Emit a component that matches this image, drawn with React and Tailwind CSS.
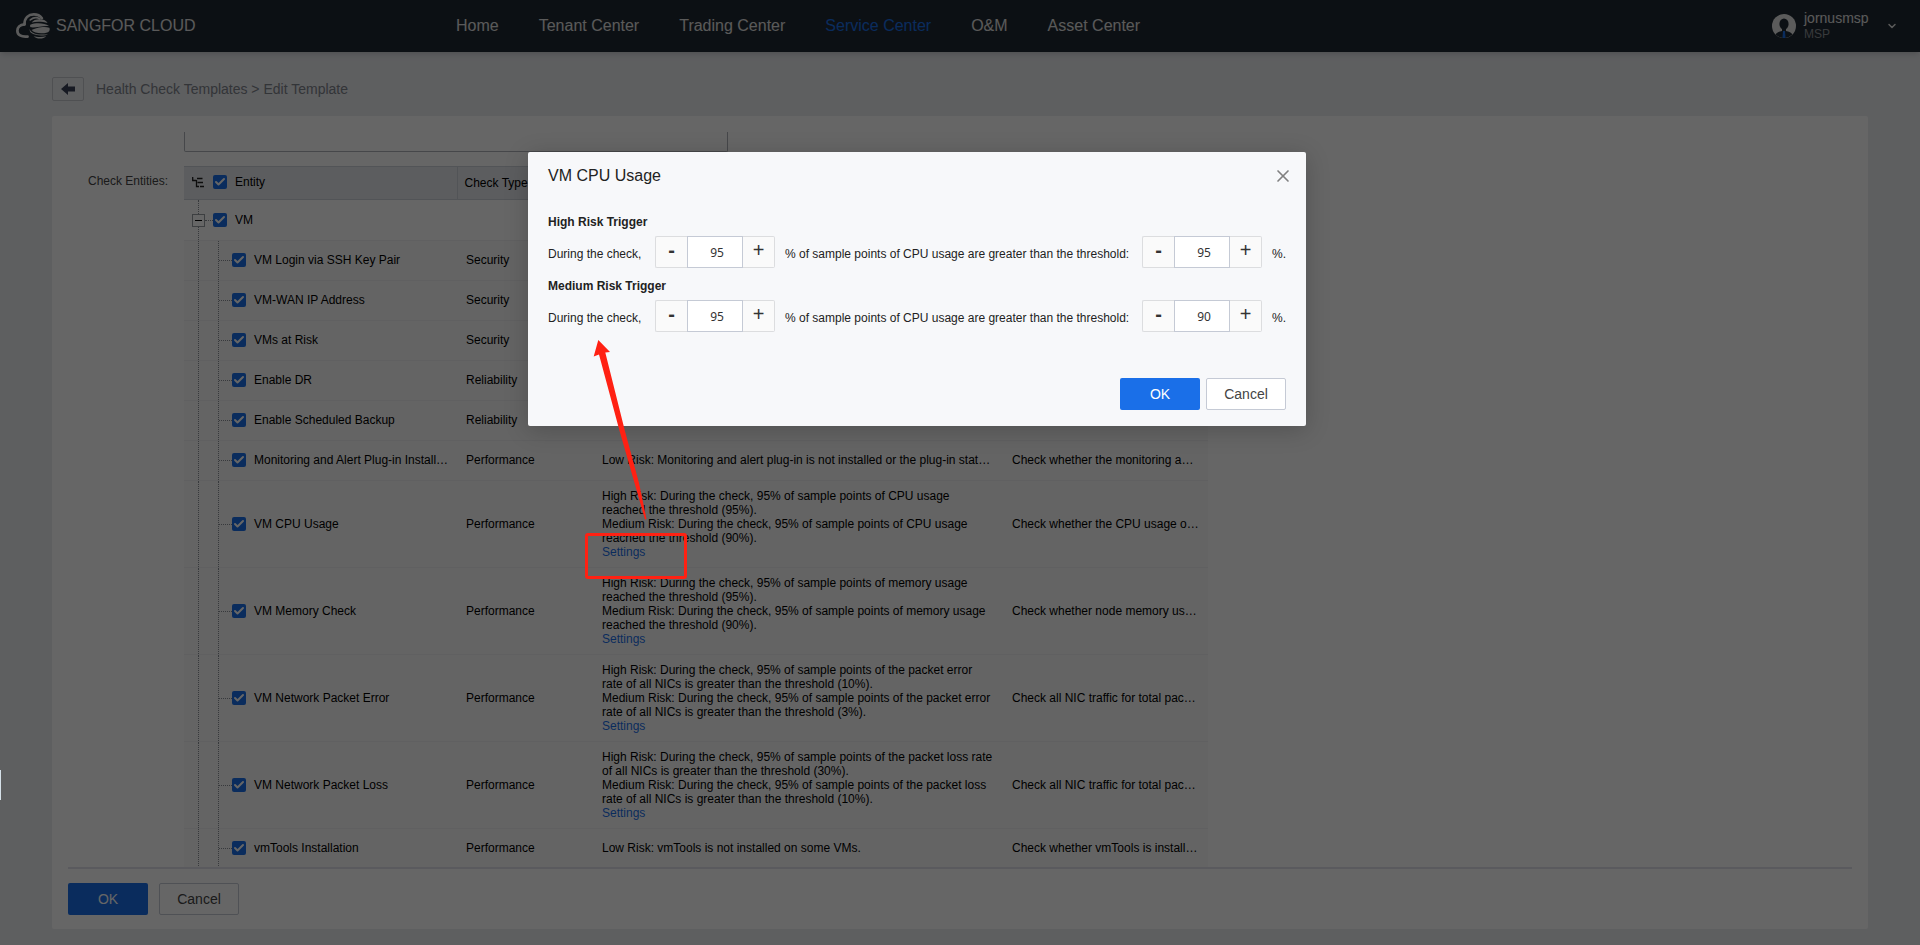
import { useState } from 'react';
import { Check, ChevronDown, X } from 'lucide-react';

const navItems = ['Home', 'Tenant Center', 'Trading Center', 'Service Center', 'O&M', 'Asset Center'];

const entities = [
  { name: 'VM Login via SSH Key Pair', type: 'Security' },
  { name: 'VM-WAN IP Address', type: 'Security' },
  { name: 'VMs at Risk', type: 'Security' },
  { name: 'Enable DR', type: 'Reliability' },
  { name: 'Enable Scheduled Backup', type: 'Reliability' },
  {
    name: 'Monitoring and Alert Plug-in Install…',
    type: 'Performance',
    rules: ['Low Risk: Monitoring and alert plug-in is not installed or the plug-in stat…'],
    desc: 'Check whether the monitoring a…',
  },
  {
    name: 'VM CPU Usage',
    type: 'Performance',
    rules: [
      'High Risk: During the check, 95% of sample points of CPU usage reached the threshold (95%).',
      'Medium Risk: During the check, 95% of sample points of CPU usage reached the threshold (90%).',
    ],
    desc: 'Check whether the CPU usage o…',
    settings: true,
  },
  {
    name: 'VM Memory Check',
    type: 'Performance',
    rules: [
      'High Risk: During the check, 95% of sample points of memory usage reached the threshold (95%).',
      'Medium Risk: During the check, 95% of sample points of memory usage reached the threshold (90%).',
    ],
    desc: 'Check whether node memory us…',
    settings: true,
  },
  {
    name: 'VM Network Packet Error',
    type: 'Performance',
    rules: [
      'High Risk: During the check, 95% of sample points of the packet error rate of all NICs is greater than the threshold (10%).',
      'Medium Risk: During the check, 95% of sample points of the packet error rate of all NICs is greater than the threshold (3%).',
    ],
    desc: 'Check all NIC traffic for total pac…',
    settings: true,
  },
  {
    name: 'VM Network Packet Loss',
    type: 'Performance',
    rules: [
      'High Risk: During the check, 95% of sample points of the packet loss rate of all NICs is greater than the threshold (30%).',
      'Medium Risk: During the check, 95% of sample points of the packet loss rate of all NICs is greater than the threshold (10%).',
    ],
    desc: 'Check all NIC traffic for total pac…',
    settings: true,
  },
  {
    name: 'vmTools Installation',
    type: 'Performance',
    rules: ['Low Risk: vmTools is not installed on some VMs.'],
    desc: 'Check whether vmTools is install…',
  },
];

function Logo() {
  return (
    <svg viewBox="0 0 100 76" className="h-[26px] w-[34px]" fill="none" stroke="#e4e4e4" strokeLinecap="round">
      <path d="M25 33C25 14 37 4 52 4C63 4 71 8 76 15" strokeWidth="8" />
      <path d="M42 20C51 13 62 12 70 17" strokeWidth="5" />
      <path d="M25 33C11 34 4 43 4 52C4 64 15 71 34 69" strokeWidth="8" />
      <g fill="#e4e4e4" stroke="none">
        <path d="M46 28C53 16 84 14 93 29C78 25 60 24 46 28Z" />
        <path d="M42 34C60 27 84 29 97 38C80 36 58 44 44 42C41 40 41 37 42 34Z" />
        <path d="M46 50C56 44 82 38 98 43C101 49 98 55 92 57C76 62 54 60 46 50Z" />
        <path d="M40 47C44 60 62 66 94 62C88 67 58 69 44 58C41 55 40 51 40 47Z" />
        <path d="M52 68C62 71 78 71 89 68C80 77 61 77 52 68Z" />
      </g>
    </svg>
  );
}

function Avatar() {
  return (
    <svg viewBox="0 0 24 24" className="size-6">
      <circle cx="12" cy="12" r="12" fill="#e4e4e4" />
      <ellipse cx="12" cy="10" rx="4.6" ry="5.6" fill="#202a33" />
      <path d="M10 14h4v3c3 .6 5.500 1.600 6.400 3.600A12 12 0 0 1 3.600 20.600C4.500 18.600 7 17.600 10 17Z" fill="#202a33" />
      <path d="M11 17h2l.5 7h-3Z" fill="#1a6fe8" />
    </svg>
  );
}

function CheckBox({ label }) {
  return (
    <label className="flex items-center gap-2">
      <span className="grid size-[14px] place-items-center">
        <input
          type="checkbox"
          defaultChecked
          className="col-start-1 row-start-1 size-[14px] appearance-none rounded-[2px] bg-[#1a6fe8]"
        />
        <Check className="pointer-events-none col-start-1 row-start-1 size-3 text-white" strokeWidth={4} />
      </span>
      <span className="whitespace-nowrap">{label}</span>
    </label>
  );
}

function Stepper({ initial, label }) {
  const [value, setValue] = useState(initial);
  return (
    <div className="flex h-8 w-[120px]">
      <button
        type="button"
        aria-label={`Decrease ${label}`}
        onClick={() => setValue(value - 1)}
        className="w-8 rounded-l-xs border border-r-0 border-[#dcdddf] bg-[#fafafa] pb-1 text-xl leading-6 font-bold text-[#333]"
      >
        -
      </button>
      <input
        type="text"
        aria-label={label}
        value={value}
        onChange={(e) => setValue(Number(e.target.value) || 0)}
        className="w-14 border border-[#c5cad5] bg-white pt-0.5 pl-1 text-center font-['Noto_Sans',sans-serif] text-xs text-[#333]"
      />
      <button
        type="button"
        aria-label={`Increase ${label}`}
        onClick={() => setValue(value + 1)}
        className="w-8 rounded-r-xs border border-l-0 border-[#dcdddf] bg-[#fafafa] pb-1 text-xl leading-6 text-[#333]"
      >
        +
      </button>
    </div>
  );
}

function Trigger({ title, percent, threshold }) {
  return (
    <section>
      <h3 className="text-xs leading-5 font-bold">{title}</h3>
      <div className="mt-1 flex items-center text-xs">
        <span className="w-[107px] pt-1">During the check,</span>
        <Stepper initial={percent} label={`${title} sample points`} />
        <span className="w-[367px] pt-1 pl-[10px]">
          % of sample points of CPU usage are greater than the threshold:
        </span>
        <Stepper initial={threshold} label={`${title} threshold`} />
        <span className="pt-1 pl-[10px]">%.</span>
      </div>
    </section>
  );
}

function FormButtons({ className }) {
  return (
    <div className={className}>
      <button type="button" className="h-8 w-20 rounded-xs bg-[#1a6fe8] text-sm text-white">
        OK
      </button>
      <button type="button" className="h-8 w-20 rounded-xs border border-[#c5cad5] bg-white text-sm text-[#444]">
        Cancel
      </button>
    </div>
  );
}

function EntityRow({ entity }) {
  const height = entity.settings ? 'h-[86px]' : 'h-[39px]';
  // single-line rows sit slightly above the middle
  const lift = entity.settings ? 'pb-0' : 'pb-0.5';
  return (
    <tr className="border-b border-[#eff0f2] bg-[#fbfbfb]">
      <td className="p-0">
        <div className={`flex ${height}`}>
          <span className="w-[15px] border-r border-dotted border-[#8b8f97]" />
          <span className="w-5 border-r border-dotted border-[#8b8f97]" />
          <span className="w-[13px] self-center border-t border-dotted border-[#8b8f97]" />
          <div className={`flex ${lift}`}>
            <CheckBox label={entity.name} />
          </div>
        </div>
      </td>
      <td className={`pl-[9px] ${lift}`}>{entity.type}</td>
      <td className={`px-[9px] ${lift}`}>
        {entity.rules?.map((rule) => (
          <p key={rule}>{rule}</p>
        ))}
        {entity.settings && (
          <a href="#settings" className="block text-[#1a6fe8]">
            Settings
          </a>
        )}
      </td>
      <td className={`pl-[9px] whitespace-nowrap ${lift}`}>{entity.desc}</td>
    </tr>
  );
}

export default function App() {
  return (
    <div className="relative flex h-screen min-w-[1360px] flex-col overflow-hidden bg-[#ebedf1] font-['Liberation_Sans',Arial,sans-serif] text-black">
      {/* Top bar */}
      <header className="flex h-[52px] shrink-0 items-center bg-[#202a33] pr-[22px] pl-4 text-[#e0e0e0] shadow-md">
        <div className="flex w-[440px] items-center gap-[6px]">
          <Logo />
          <span className="text-base leading-5">SANGFOR CLOUD</span>
        </div>
        <nav className="flex flex-1 gap-10">
          {navItems.map((item) => (
            <a
              key={item}
              href="#nav"
              className={item === 'Service Center' ? 'text-[#1a6fe8]' : 'text-[#e0e0e0]'}
            >
              {item}
            </a>
          ))}
        </nav>
        <Avatar />
        <div className="ml-2 w-[82px]">
          <p className="text-sm leading-4">jornusmsp</p>
          <p className="text-xs leading-4 text-[#8d9196]">MSP</p>
        </div>
        <ChevronDown className="size-3" strokeWidth={3} />
      </header>

      <main className="flex min-h-0 flex-1 flex-col px-[52px] pt-[25px] pb-4">
        {/* Breadcrumb */}
        <div className="flex items-center gap-3">
          <button
            type="button"
            aria-label="Back"
            className="flex h-6 w-8 items-center justify-center rounded-xs border border-[#c5c8ce]"
          >
            <svg viewBox="0 0 14 12" className="h-3 w-[14px]" fill="#3a4358">
              <path d="M0 6L7 0V3.500H14V8.500H7V12Z" />
            </svg>
          </button>
          <p className="text-sm leading-6 text-[#80848c]">Health Check Templates &gt; Edit Template</p>
        </div>

        <div className="mt-[15px] flex min-h-0 flex-1 flex-col rounded-xs bg-white px-4 pt-4 pb-[14px]">
          <div className="min-h-0 flex-1 overflow-hidden text-xs leading-[14px]">
            <div className="pl-[116px]">
              <textarea
                aria-label="Description"
                className="block h-[20px] w-[544px] resize-none rounded-b-xs border border-t-0 border-[#aeb2b9]"
              />
            </div>
            <div className="mt-[14px] flex">
              <p className="w-[116px] pt-2 pl-5 text-[#444]">Check Entities:</p>
              <table className="w-[1024px] table-fixed border-collapse text-left">
                <colgroup>
                  <col className="w-[273px]" />
                  <col className="w-[136px]" />
                  <col className="w-[410px]" />
                  <col />
                </colgroup>
                <thead>
                  <tr className="border-y border-[#cdd2da] bg-[#e6e9ee]">
                    <th className="border-r border-[#cdd2da] p-0 font-normal">
                      <div className="flex h-8 items-center pb-0.5 pl-2">
                        <svg viewBox="0 0 12 11" className="mr-[9px] h-[11px] w-3" stroke="#222" strokeWidth="1.3" fill="none">
                          <path d="M.7 0V3.500H4.500M5 1.500H10.500M4.500 3V9.500H7M5.500 5.500H11M8 9.500H12" />
                        </svg>
                        <CheckBox label="Entity" />
                      </div>
                    </th>
                    <th className="p-0 pl-[7px] font-normal">Check Type</th>
                    <th className="p-0" />
                    <th className="p-0" />
                  </tr>
                </thead>
                <tbody>
                  <tr className="border-b border-[#eff0f2]">
                    <td className="p-0" colSpan={4}>
                      <div className="flex h-10 items-center pl-2">
                        <div className="flex h-full w-[13px] flex-col items-center">
                          <span className="flex-1 border-l border-dotted border-[#8b8f97]" />
                          <button
                            type="button"
                            aria-label="Collapse VM"
                            className="flex size-[13px] items-center justify-center border border-[#9a9da3]"
                          >
                            <span className="h-px w-[7px] bg-black" />
                          </button>
                          <span className="flex-1 border-l border-dotted border-[#8b8f97]" />
                        </div>
                        <span className="w-2 border-t border-dotted border-[#8b8f97]" />
                        <CheckBox label="VM" />
                      </div>
                    </td>
                  </tr>
                  {entities.map((entity) => (
                    <EntityRow key={entity.name} entity={entity} />
                  ))}
                </tbody>
              </table>
            </div>
          </div>
          <FormButtons className="flex gap-[11px] border-t-2 border-[#e0e2ea] pt-[14px]" />
        </div>
      </main>

      {/* Backdrop */}
      <div className="absolute inset-0 bg-black/60" />
      <div className="absolute top-[770px] left-0 h-[30px] w-px bg-[#d5e0e8]" />

      {/* Threshold dialog */}
      <div
        role="dialog"
        aria-labelledby="dialog-title"
        className="absolute top-[152px] left-[528px] w-[778px] rounded-xs bg-[#f7f8fa] px-5 pb-4 shadow-[0_4px_24px_rgba(0,0,0,0.2)]"
      >
        <div className="flex h-12 items-center justify-between">
          <h2 id="dialog-title" className="text-base leading-6 text-[#222]">
            VM CPU Usage
          </h2>
          <button type="button" aria-label="Close" className="-mr-1.5 flex size-[18px] items-center justify-center">
            <X className="size-5 shrink-0 text-[#808080]" strokeWidth={2} />
          </button>
        </div>
        <div className="mt-3 flex flex-col gap-2 text-[#222]">
          <Trigger title="High Risk Trigger" percent={95} threshold={95} />
          <Trigger title="Medium Risk Trigger" percent={95} threshold={90} />
        </div>
        <FormButtons className="mt-[46px] flex justify-end gap-[6px]" />
      </div>

      {/* Callout: arrow from the Settings link to the dialog */}
      <div className="pointer-events-none absolute top-[533px] left-[585px] h-[46px] w-[102px] rounded-[3px] border-[3px] border-[#ff2113]" />
      <svg
        viewBox="0 0 54 180"
        className="pointer-events-none absolute top-[340px] left-[593px] h-[180px] w-[54px]"
        fill="#ff2113"
      >
        <path d="M5.300 0L17 12L12.300 12.500L31.700 90L46 143L53.500 179L52 179.500L41.500 143L26.300 90L6 14.500L.7 16.500Z" />
      </svg>
    </div>
  );
}
